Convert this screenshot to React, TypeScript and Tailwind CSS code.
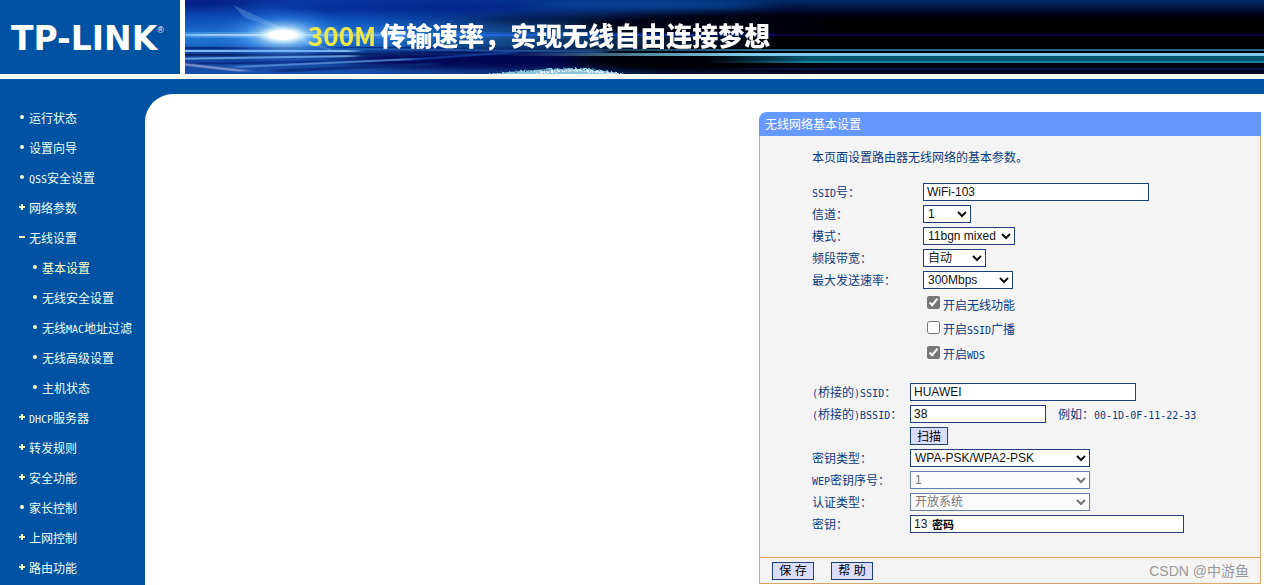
import type { ReactNode } from "react";

const SONG = "font-['Noto_Sans_CJK_SC',sans-serif]";
const ARIAL = "font-['Liberation_Sans','Noto_Sans_CJK_SC',sans-serif]";

/** Sets Latin runs in a half-width face next to the full-width characters. */
function Mixed({ children }: { children: string }) {
  const parts = children.split(/([\x21-\x7e]+)/).filter(Boolean);
  return (
    <>
      {parts.map((part, i) =>
        /^[\x21-\x7e]/.test(part) ? (
          <span key={i} className="font-['DejaVu_Sans_Mono',monospace] text-[10px]">
            {part}
          </span>
        ) : (
          part
        ),
      )}
    </>
  );
}

type Mark = "dot" | "plus" | "minus";

interface NavItem {
  label: string;
  mark: Mark;
  sub?: boolean;
  active?: boolean;
}

const NAV: NavItem[] = [
  { label: "运行状态", mark: "dot" },
  { label: "设置向导", mark: "dot" },
  { label: "QSS安全设置", mark: "dot" },
  { label: "网络参数", mark: "plus" },
  { label: "无线设置", mark: "minus" },
  { label: "基本设置", mark: "dot", sub: true, active: true },
  { label: "无线安全设置", mark: "dot", sub: true },
  { label: "无线MAC地址过滤", mark: "dot", sub: true },
  { label: "无线高级设置", mark: "dot", sub: true },
  { label: "主机状态", mark: "dot", sub: true },
  { label: "DHCP服务器", mark: "plus" },
  { label: "转发规则", mark: "plus" },
  { label: "安全功能", mark: "plus" },
  { label: "家长控制", mark: "dot" },
  { label: "上网控制", mark: "plus" },
  { label: "路由功能", mark: "plus" },
];

function MarkIcon({ mark }: { mark: Mark }) {
  return (
    <svg width="6" height="8" viewBox="0 0 6 8" className="shrink-0" fill="#f4ffc8" aria-hidden="true">
      {mark === "dot" ? (
        <circle cx="3" cy="3" r="2" />
      ) : (
        <>
          <rect x="0" y="2" width="6" height="2" />
          {mark === "plus" && <rect x="2" y="0" width="2" height="6" />}
        </>
      )}
    </svg>
  );
}

function Banner() {
  return (
    <div className="relative h-[74px] min-w-0 flex-1 overflow-hidden bg-black">
      <svg className="absolute inset-0 h-full w-full" aria-hidden="true">
        <defs>
          <linearGradient id="right" x1="0" y1="0" x2="0" y2="74" gradientUnits="userSpaceOnUse">
            <stop offset="0" stopColor="#002c66" />
            <stop offset="0.12" stopColor="#001038" />
            <stop offset="0.22" stopColor="#00000c" />
            <stop offset="0.3" stopColor="#000000" />
            <stop offset="0.85" stopColor="#000008" />
            <stop offset="1" stopColor="#000428" />
          </linearGradient>
          <linearGradient id="sky" x1="0" y1="0" x2="0" y2="74" gradientUnits="userSpaceOnUse">
            <stop offset="0" stopColor="#0a36a0" />
            <stop offset="0.25" stopColor="#0c4cb8" />
            <stop offset="0.48" stopColor="#2478d4" />
            <stop offset="0.6" stopColor="#1a68c8" />
            <stop offset="0.72" stopColor="#104098" />
            <stop offset="1" stopColor="#1850ac" />
          </linearGradient>
          <linearGradient id="fade" x1="0" y1="0" x2="600" y2="0" gradientUnits="userSpaceOnUse">
            <stop offset="0" stopColor="#fff" stopOpacity="1" />
            <stop offset="0.3" stopColor="#fff" stopOpacity="1" />
            <stop offset="0.55" stopColor="#fff" stopOpacity="0.65" />
            <stop offset="0.8" stopColor="#fff" stopOpacity="0.3" />
            <stop offset="1" stopColor="#fff" stopOpacity="0" />
          </linearGradient>
          <mask id="left" maskUnits="userSpaceOnUse" x="0" y="0" width="600" height="74">
            <rect width="600" height="74" fill="url(#fade)" />
          </mask>
          <radialGradient id="glow">
            <stop offset="0" stopColor="#fff" />
            <stop offset="0.25" stopColor="#c8ecff" stopOpacity="0.9" />
            <stop offset="0.55" stopColor="#58a8ff" stopOpacity="0.45" />
            <stop offset="1" stopColor="#1060d0" stopOpacity="0" />
          </radialGradient>
          <radialGradient id="core">
            <stop offset="0" stopColor="#fff" />
            <stop offset="0.5" stopColor="#fff" />
            <stop offset="1" stopColor="#a8e0ff" stopOpacity="0" />
          </radialGradient>
          <linearGradient id="beam" x1="0" y1="0" x2="590" y2="0" gradientUnits="userSpaceOnUse">
            <stop offset="0" stopColor="#70b8f8" />
            <stop offset="0.12" stopColor="#e8faff" />
            <stop offset="0.22" stopColor="#90ccff" />
            <stop offset="0.4" stopColor="#2c80f0" />
            <stop offset="0.75" stopColor="#0c3cb8" />
            <stop offset="1" stopColor="#080850" />
          </linearGradient>
          <linearGradient id="upper" x1="320" y1="0" x2="560" y2="0" gradientUnits="userSpaceOnUse">
            <stop offset="0" stopColor="#fff" stopOpacity="0" />
            <stop offset="0.6" stopColor="#fff" stopOpacity="0.7" />
            <stop offset="1" stopColor="#fff" />
          </linearGradient>
          <linearGradient id="lower" x1="520" y1="0" x2="620" y2="0" gradientUnits="userSpaceOnUse">
            <stop offset="0" stopColor="#fff" stopOpacity="0" />
            <stop offset="1" stopColor="#fff" />
          </linearGradient>
          <mask id="upper-mask" maskUnits="userSpaceOnUse" x="0" y="0" width="6000" height="74">
            <rect width="6000" height="74" fill="url(#upper)" />
          </mask>
          <mask id="lower-mask" maskUnits="userSpaceOnUse" x="0" y="0" width="6000" height="74">
            <rect width="6000" height="74" fill="url(#lower)" />
          </mask>
          <filter id="soft" filterUnits="userSpaceOnUse" x="-40" y="-20" width="700" height="120" colorInterpolationFilters="sRGB">
            <feGaussianBlur stdDeviation="6 0.6" />
          </filter>
          <filter id="cloud" filterUnits="userSpaceOnUse" x="-60" y="-40" width="800" height="160" colorInterpolationFilters="sRGB">
            <feGaussianBlur stdDeviation="18 3" />
          </filter>
          <filter id="ice" filterUnits="userSpaceOnUse" x="280" y="60" width="190" height="20">
            <feTurbulence type="fractalNoise" baseFrequency="0.5" numOctaves="2" seed="4" result="n" />
            <feDisplacementMap in="SourceGraphic" in2="n" scale="5" />
          </filter>
        </defs>
        <rect width="100%" height="74" fill="url(#right)" />
        <g mask="url(#left)">
          <rect width="600" height="74" fill="url(#sky)" />
        </g>
        <g filter="url(#cloud)">
          <ellipse cx="370" cy="20" rx="80" ry="2" fill="#000418" opacity="0.8" />
          <ellipse cx="520" cy="26" rx="120" ry="12" fill="#000010" opacity="0.9" />
          <ellipse cx="300" cy="60" rx="140" ry="9" fill="#00004c" opacity="0.85" />
          <ellipse cx="500" cy="60" rx="110" ry="12" fill="#000006" />
          <ellipse cx="460" cy="5" rx="120" ry="5" fill="#0848a0" opacity="0.8" />
          <ellipse cx="230" cy="8" rx="130" ry="6" fill="#02208c" opacity="0.6" />
          <ellipse cx="10" cy="2" rx="60" ry="8" fill="#02187a" opacity="0.7" />
        </g>
        <g filter="url(#soft)" fill="none">
          <path d="M-20 48H260" stroke="#082c80" strokeWidth="2" />
          <path d="M-20 51H170" stroke="#88bcf0" strokeWidth="2" />
          <path d="M-20 55L330 54" stroke="#06246c" strokeWidth="2" />
          <path d="M-20 59L170 56" stroke="#80b4ec" strokeWidth="2" opacity="0.8" />
          <path d="M-20 64L190 61" stroke="#0a2c84" strokeWidth="2" />
          <path d="M50 67L230 59" stroke="#5c94dc" strokeWidth="2" opacity="0.8" />
          <path d="M90 71L250 64" stroke="#0a2878" strokeWidth="3" opacity="0.8" />
          <path d="M-10 63Q20 67 60 71" stroke="#b4b8e8" strokeWidth="2" opacity="0.8" />
          <path d="M110 48L420 52" stroke="#2c6cc0" strokeWidth="2" opacity="0.6" />
          <path d="M220 60L330 52" stroke="#1a4cac" strokeWidth="2" opacity="0.7" />
        </g>
        <path d="M48 5L118 37L60 18Z" fill="#b0dcff" opacity="0.25" />
        <path d="M110 34L152 52L120 44Z" fill="#b0dcff" opacity="0.25" />
        <rect y="32" width="590" height="6" fill="url(#beam)" opacity="0.3" />
        <rect y="34" width="590" height="2" fill="url(#beam)" />
        <rect x="590" y="34" width="100%" height="2" fill="#080040" />
        <ellipse cx="98" cy="35" rx="74" ry="30" fill="url(#glow)" opacity="0.85" />
        <ellipse cx="98" cy="35" rx="26" ry="9" fill="url(#core)" />
        <g mask="url(#upper-mask)">
          <rect x="300" y="49" width="100%" height="2" fill="#2c6888" />
          <rect x="300" y="53" width="100%" height="3" fill="#80cce8" />
        </g>
        <g mask="url(#lower-mask)">
          <rect x="500" y="56" width="100%" height="5" fill="#04546e" />
          <rect x="500" y="61" width="100%" height="2" fill="#187a9c" />
          <rect x="500" y="68" width="100%" height="2" fill="#041640" />
        </g>
        <path d="M300 78L304 74Q350 69 392 68Q420 70 456 77V78Z" fill="#8cc4dc" filter="url(#ice)" />
        <path d="M350 73L394 70L440 75" stroke="#e8f8ff" strokeWidth="2" strokeDasharray="3 2 5 1" fill="none" filter="url(#ice)" />
      </svg>
      <p className="relative flex h-[70px] items-center gap-1 pl-[123px] font-['Noto_Sans_CJK_SC',sans-serif] text-[26px] font-black whitespace-nowrap text-white">
        <span className="font-bold text-[#ece84a]">300M</span>
        <span>传输速率，实现无线自由连接梦想</span>
      </p>
    </div>
  );
}

const FIELD = `${ARIAL} h-[18px] border border-[#1f3f7c] bg-white text-xs text-[#111] disabled:border-[#6a7fab] disabled:bg-[#fbfbfb] disabled:text-[#777]`;
const BUTTON = `${ARIAL} flex h-[18px] items-center justify-center border border-[#1f3f7c] bg-[#dcdcfc] pt-px text-xs text-black`;

function Row({ id, label, wide, children }: { id: string; label: string; wide?: boolean; children: ReactNode }) {
  return (
    <div className="flex h-[22px] items-center">
      <label htmlFor={id} className={wide ? "w-[111px] shrink-0" : "w-[98px] shrink-0"}>
        <Mixed>{label}</Mixed>
      </label>
      {children}
    </div>
  );
}

function Pick({ id, value, className, disabled }: { id: string; value: string; className: string; disabled?: boolean }) {
  return (
    <select id={id} disabled={disabled} className={`${FIELD} ${className}`}>
      <option>{value}</option>
    </select>
  );
}

function Check({ label, checked }: { label: string; checked?: boolean }) {
  return (
    <label className="flex h-[25px] items-center gap-[3px] pt-0.5 pl-[115px]">
      <input type="checkbox" defaultChecked={checked} className="mb-1 size-[13px] accent-[#767676]" />
      <span>
        <Mixed>{label}</Mixed>
      </span>
    </label>
  );
}

export default function App() {
  return (
    <div className={`${SONG} flex min-h-screen flex-col bg-white text-xs text-[#0b3b80]`}>
      <header className="flex gap-[5px]">
        <div className="flex h-[74px] w-[180px] shrink-0 items-center bg-[#0052a3] pt-0.5 pl-[11px] text-white">
          <span className="font-['DejaVu_Sans',sans-serif] text-[33px] leading-none font-bold whitespace-nowrap">
            TP-LINK
          </span>
          <span className="mb-4 font-['Liberation_Sans',sans-serif] text-[9px] leading-none">®</span>
        </div>
        <Banner />
      </header>

      <div className="mt-[5px] flex flex-1 flex-col bg-[#0052a3] pt-[15px]">
        <div className="flex flex-1">
          <nav className="w-[145px] shrink-0 pt-[9px]">
            <ul>
              {NAV.map((item) => (
                <li key={item.label}>
                  <a
                    href="#"
                    className={`flex h-[30px] items-center gap-1 whitespace-nowrap ${item.sub ? "pl-8" : "pl-[19px]"} ${item.active ? "text-[#f8ffc4]" : "text-[#ecfff4]"}`}
                  >
                    <MarkIcon mark={item.mark} />
                    <span>
                      <Mixed>{item.label}</Mixed>
                    </span>
                  </a>
                </li>
              ))}
            </ul>
          </nav>

          <main className="flex min-w-0 flex-1 items-start justify-end rounded-tl-[28px] bg-white pt-[18px] pr-[3px]">
            <form className="w-[502px]" onSubmit={(e) => e.preventDefault()}>
              <h1 className="flex h-6 items-center rounded-tl-lg bg-[#6699ff] pl-1.5 text-xs text-white">
                无线网络基本设置
              </h1>
              <div className="border-x border-b border-[#dba562] bg-[#f4f4f4]">
                <div className="pt-[11px] pb-[22px] pl-[52px]">
                  <p className="mb-[14px] leading-5">本页面设置路由器无线网络的基本参数。</p>

                  <Row id="ssid" label="SSID号：" wide>
                    <input id="ssid" defaultValue="WiFi-103" className={`${FIELD} w-[226px] px-[3px]`} />
                  </Row>
                  <Row id="channel" label="信道：" wide>
                    <Pick id="channel" value="1" className="w-12" />
                  </Row>
                  <Row id="mode" label="模式：" wide>
                    <Pick id="mode" value="11bgn mixed" className="w-[92px]" />
                  </Row>
                  <Row id="width" label="频段带宽：" wide>
                    <Pick id="width" value="自动" className="w-[63px]" />
                  </Row>
                  <Row id="rate" label="最大发送速率：" wide>
                    <Pick id="rate" value="300Mbps" className="w-[90px]" />
                  </Row>

                  <Check label="开启无线功能" checked />
                  <Check label="开启SSID广播" />
                  <Check label="开启WDS" checked />

                  <div className="mt-[15px]">
                    <Row id="bridge-ssid" label="(桥接的)SSID：">
                      <input id="bridge-ssid" defaultValue="HUAWEI" className={`${FIELD} w-[226px] px-[3px]`} />
                    </Row>
                    <Row id="bridge-bssid" label="(桥接的)BSSID：">
                      <input id="bridge-bssid" defaultValue="38" className={`${FIELD} w-[136px] px-[3px]`} />
                      <span className="pl-3">
                        <Mixed>例如：00-1D-0F-11-22-33</Mixed>
                      </span>
                    </Row>
                    <div className="flex h-[22px] items-center pl-[98px]">
                      <button type="button" className={`${BUTTON} w-[38px]`}>
                        扫描
                      </button>
                    </div>
                    <Row id="key-type" label="密钥类型：">
                      <Pick id="key-type" value="WPA-PSK/WPA2-PSK" className="w-[180px]" />
                    </Row>
                    <Row id="wep-index" label="WEP密钥序号：">
                      <Pick id="wep-index" value="1" className="w-[180px]" disabled />
                    </Row>
                    <Row id="auth" label="认证类型：">
                      <Pick id="auth" value="开放系统" className="w-[180px]" disabled />
                    </Row>
                    <Row id="key" label="密钥：">
                      <div className="relative flex">
                        <input id="key" defaultValue="13" className={`${FIELD} w-[274px] px-[3px]`} />
                        <span className="pointer-events-none absolute inset-y-0 left-[22px] flex items-center text-[11px] font-bold text-black">
                          密码
                        </span>
                      </div>
                    </Row>
                  </div>
                </div>

                <div className="flex h-[26px] items-center border-t border-[#dba562] px-[11px]">
                  <button type="submit" className={`${BUTTON} ml-px w-[42px]`}>
                    保 存
                  </button>
                  <button type="button" className={`${BUTTON} ml-[17px] w-[42px]`}>
                    帮 助
                  </button>
                  <span className={`${ARIAL} ml-auto text-sm text-[#999]`}>CSDN @中游鱼</span>
                </div>
              </div>
            </form>
          </main>
        </div>
      </div>
    </div>
  );
}
